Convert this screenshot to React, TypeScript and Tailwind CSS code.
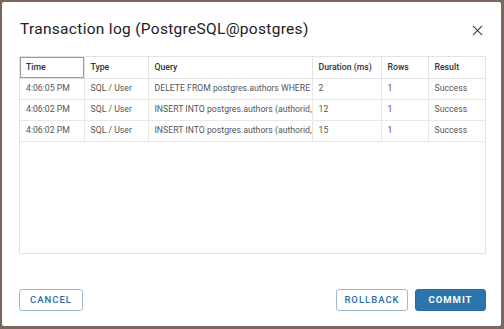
const rows = [
  { time: "4:06:05 PM", type: "SQL / User", query: "DELETE FROM postgres.authors WHERE id = 4", duration: "2", rows: "1", result: "Success" },
  { time: "4:06:02 PM", type: "SQL / User", query: "INSERT INTO postgres.authors (authorid, name) VALUES (4, 'x')", duration: "12", rows: "1", result: "Success" },
  { time: "4:06:02 PM", type: "SQL / User", query: "INSERT INTO postgres.authors (authorid, name) VALUES (3, 'y')", duration: "15", rows: "1", result: "Success" },
];

const cols = [
  { label: "Time", w: "w-[64px]" },
  { label: "Type", w: "w-[64px]" },
  { label: "Query", w: "w-[164px]" },
  { label: "Duration (ms)", w: "w-[69px]" },
  { label: "Rows", w: "w-[47px]" },
  { label: "Result", w: "w-[57px]" },
];

const cell = "pl-[6px] border-b border-r border-[#e8e8e8] whitespace-nowrap overflow-hidden";

export default function App() {
  return (
    <div className="w-[504px] h-[329px] bg-[#7a665a] pt-[2px] pl-[2px] pr-[3px] pb-[3px] font-['Roboto',sans-serif]">
      <div className="w-full h-full bg-white rounded-[2px] flex flex-col pl-[17px] pr-[14px]">
        <div className="flex items-center justify-between h-[54px] pt-[2px]">
          <h1 className="text-[15.5px] text-[#222] tracking-[0.3px] pl-[1px]">Transaction log (PostgreSQL@postgres)</h1>
          <button className="text-[#444] mr-[4px]">
            <svg width="11" height="11" viewBox="0 0 12 12" fill="none" stroke="currentColor" strokeWidth="1.3">
              <path d="M1 1L11 11M11 1L1 11" />
            </svg>
          </button>
        </div>
        <div className="h-[198px] w-[467px] border border-[#e2e2e2] overflow-hidden">
          <table className="w-[465px] border-collapse table-fixed text-[8.7px] text-[#555]">
            <thead>
              <tr className="h-[21px]">
                {cols.map((c, i) => (
                  <th
                    key={c.label}
                    className={`${c.w} text-left font-medium text-[#333] pl-[6px] border-b border-r border-[#e2e2e2] whitespace-nowrap ${i === 0 ? "outline outline-1 outline-[#9a9a9a] -outline-offset-1" : ""}`}
                  >
                    {c.label}
                  </th>
                ))}
              </tr>
            </thead>
            <tbody>
              {rows.map((r, i) => (
                <tr key={i} className="h-[21px]">
                  <td className={cell}>{r.time}</td>
                  <td className={cell}>{r.type}</td>
                  <td className={cell}>{r.query}</td>
                  <td className={cell}>{r.duration}</td>
                  <td className={cell}>{r.rows}</td>
                  <td className={cell}>{r.result}</td>
                </tr>
              ))}
            </tbody>
          </table>
        </div>
        <div className="flex items-center justify-between mt-[35px] w-[467px]">
          <button className="w-[64px] h-[22px] border border-[#9fbad3] rounded-[3px] text-[#2b6ea6] text-[9.5px] font-medium tracking-[1px]">CANCEL</button>
          <div className="flex gap-[7px]">
            <button className="w-[72px] h-[22px] border border-[#9fbad3] rounded-[3px] text-[#2b6ea6] text-[9.5px] font-medium tracking-[1px]">ROLLBACK</button>
            <button className="w-[71px] h-[22px] bg-[#2b74ae] border border-[#2a6aa0] rounded-[3px] text-white text-[9.5px] font-bold tracking-[1px]">COMMIT</button>
          </div>
        </div>
      </div>
    </div>
  );
}
